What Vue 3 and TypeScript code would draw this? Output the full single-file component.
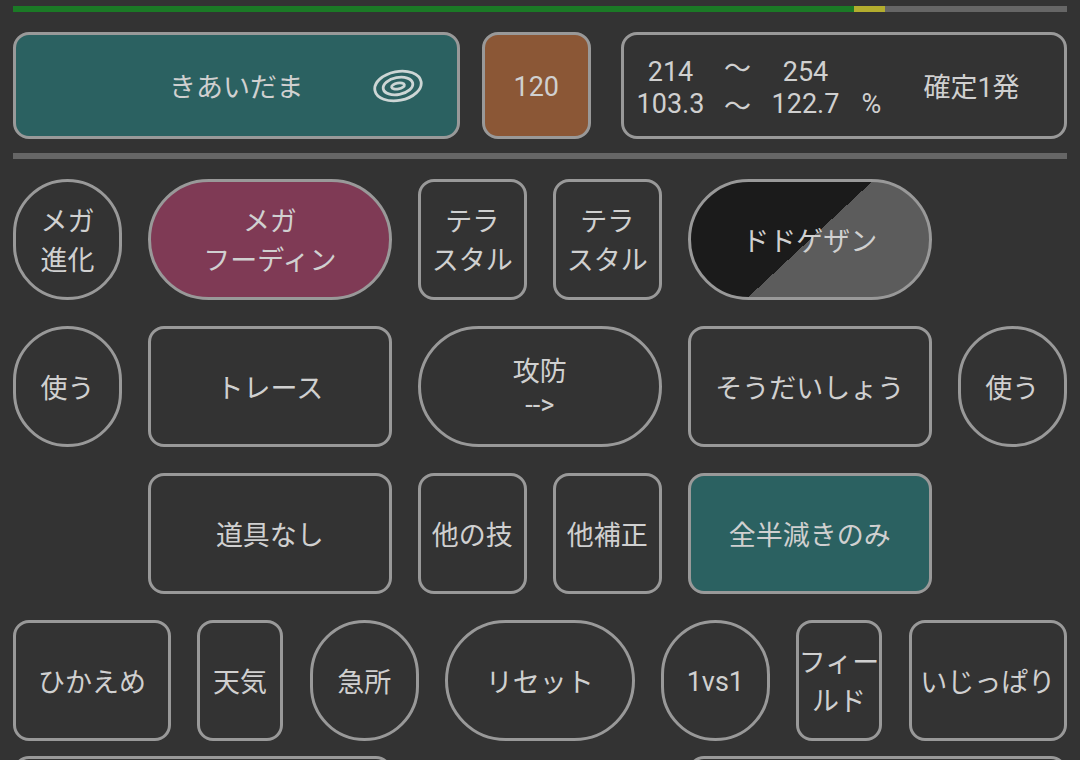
<script setup lang="ts">
interface Btn {
  lines: string[];
  shape?: 'pill';
  tone?: 'teal' | 'mega' | 'split';
  col?: string;
  latin?: boolean;
  narrow?: boolean;
}

const rows: Btn[][] = [
  [
    { lines: ['メガ', '進化'], shape: 'pill', col: '1' },
    { lines: ['メガ', 'フーディン'], shape: 'pill', tone: 'mega', col: '2 / span 2' },
    { lines: ['テラ', 'スタル'], col: '4' },
    { lines: ['テラ', 'スタル'], col: '5' },
    { lines: ['ドドゲザン'], shape: 'pill', tone: 'split', col: '6 / span 2' },
  ],
  [
    { lines: ['使う'], shape: 'pill', col: '1' },
    { lines: ['トレース'], col: '2 / span 2' },
    { lines: ['攻防', '-->'], shape: 'pill', col: '4 / span 2' },
    { lines: ['そうだいしょう'], col: '6 / span 2' },
    { lines: ['使う'], shape: 'pill', col: '8' },
  ],
  [
    { lines: ['道具なし'], col: '2 / span 2' },
    { lines: ['他の技'], col: '4' },
    { lines: ['他補正'], col: '5' },
    { lines: ['全半減きのみ'], tone: 'teal', col: '6 / span 2' },
  ],
];

const bottom: Btn[] = [
  { lines: ['ひかえめ'] },
  { lines: ['天気'], narrow: true },
  { lines: ['急所'], shape: 'pill' },
  { lines: ['リセット'], shape: 'pill' },
  { lines: ['1vs1'], shape: 'pill', latin: true },
  { lines: ['フィー', 'ルド'], narrow: true },
  { lines: ['いじっぱり'] },
];
</script>

<template>
  <main class="page">
    <div class="hp">
      <span class="hp-green"></span>
      <span class="hp-yellow"></span>
    </div>

    <section class="top">
      <div class="btn tall teal move">
        <span>きあいだま</span>
        <svg class="target" viewBox="0 0 50 34" width="50" height="34" aria-hidden="true">
          <g fill="none" stroke="#cdd6d5" stroke-width="2.8" transform="rotate(-11 25 17)">
            <ellipse cx="25" cy="17" rx="23.5" ry="14.5" />
            <ellipse cx="25" cy="17" rx="15" ry="8.5" />
            <ellipse cx="25" cy="17" rx="6.5" ry="3" />
          </g>
        </svg>
      </div>
      <div class="btn tall power latin">120</div>
      <div class="btn tall result">
        <div class="damage">
          <span>214</span><span class="wave up">〜</span><span>254</span><span></span>
          <span>103.3</span><span class="wave down">〜</span><span>122.7</span><span>%</span>
        </div>
        <div class="verdict">確定1発</div>
      </div>
    </section>

    <div class="divider"></div>

    <section class="grid">
      <template v-for="(row, r) in rows" :key="r">
        <button
          v-for="(b, i) in row"
          :key="i"
          class="btn"
          :class="[b.shape, b.tone, { stack: b.lines.length > 1 }]"
          :style="{ gridColumn: b.col, gridRow: r + 1 }"
        >
          <span v-for="l in b.lines" :key="l" class="line">{{ l }}</span>
        </button>
      </template>
    </section>

    <section class="bottom">
      <button
        v-for="(b, i) in bottom"
        :key="i"
        class="btn"
        :class="[b.shape, { latin: b.latin, narrow: b.narrow, stack: b.lines.length > 1 }]"
      >
        <span v-for="l in b.lines" :key="l" class="line">{{ l }}</span>
      </button>
    </section>

    <section class="partial">
      <div class="btn stub"></div>
      <div class="btn stub"></div>
    </section>
  </main>
</template>

<style scoped>
.page {
  width: 1080px;
  height: 760px;
  box-sizing: border-box;
  padding: 6px 13px 0;
  overflow: hidden;
  background: #333333;
  color: #d0d0d0;
  font-family: Roboto, "Noto Sans CJK JP", sans-serif;
  font-size: 27px;
}
.hp {
  display: flex;
  height: 6px;
  background: #666666;
}
.hp-green {
  width: 841px;
  background: #1b7a26;
}
.hp-yellow {
  width: 31px;
  background: #b3ad2e;
}
.top {
  display: flex;
  margin-top: 20px;
}
.top .move {
  width: 446.5px;
}
.top .power {
  width: 108.5px;
  margin-left: 22.5px;
}
.top .result {
  width: 446.5px;
  margin-left: auto;
}
.divider {
  height: 6px;
  margin-top: 14px;
  background: #666666;
}
.btn {
  display: flex;
  flex-direction: column;
  align-items: center;
  justify-content: center;
  box-sizing: border-box;
  height: 121px;
  padding: 0;
  border: 3px solid #999999;
  border-radius: 16px;
  background: transparent;
  color: inherit;
  font: inherit;
}
.line {
  display: block;
  white-space: nowrap;
}
.latin {
  padding-top: 3px;
}
.stack {
  padding-bottom: 2px;
}
.narrow {
  width: 86px;
}
.tall {
  height: 107px;
}
.pill {
  border-radius: 61px;
}
.teal {
  background: #2b6161;
}
.mega {
  background: #7f3a55;
}
.split {
  background: linear-gradient(137deg, #1b1b1b 50%, #5c5c5c 50%);
}
.power {
  background: #8b5736;
}
.move {
  position: relative;
}
.target {
  position: absolute;
  top: 34px;
  right: 34px;
}
.result {
  flex-direction: row;
  justify-content: flex-start;
  padding-left: 1px;
}
.damage {
  display: grid;
  grid-template-columns: 92px 42px 94px 38px;
  grid-auto-rows: 32px;
  margin-top: 4px;
  line-height: 32px;
  text-align: center;
}
.wave.up {
  transform: translateY(-3px);
}
.wave.down {
  transform: translateY(3px);
}
.verdict {
  width: 162px;
  text-align: center;
}
.grid {
  display: grid;
  grid-template-columns: repeat(8, 108.8px);
  grid-auto-rows: 121px;
  column-gap: 26.2px;
  row-gap: 26px;
  margin-top: 20px;
}
.bottom {
  display: grid;
  grid-template-columns: 157.8px 86.8px 108.8px 189.8px 108.8px 86.8px 157.8px;
  column-gap: 26.2px;
  margin-top: 26px;
}
.partial {
  display: flex;
  justify-content: space-between;
  margin-top: 15px;
}
.stub {
  width: 378.7px;
}
</style>
